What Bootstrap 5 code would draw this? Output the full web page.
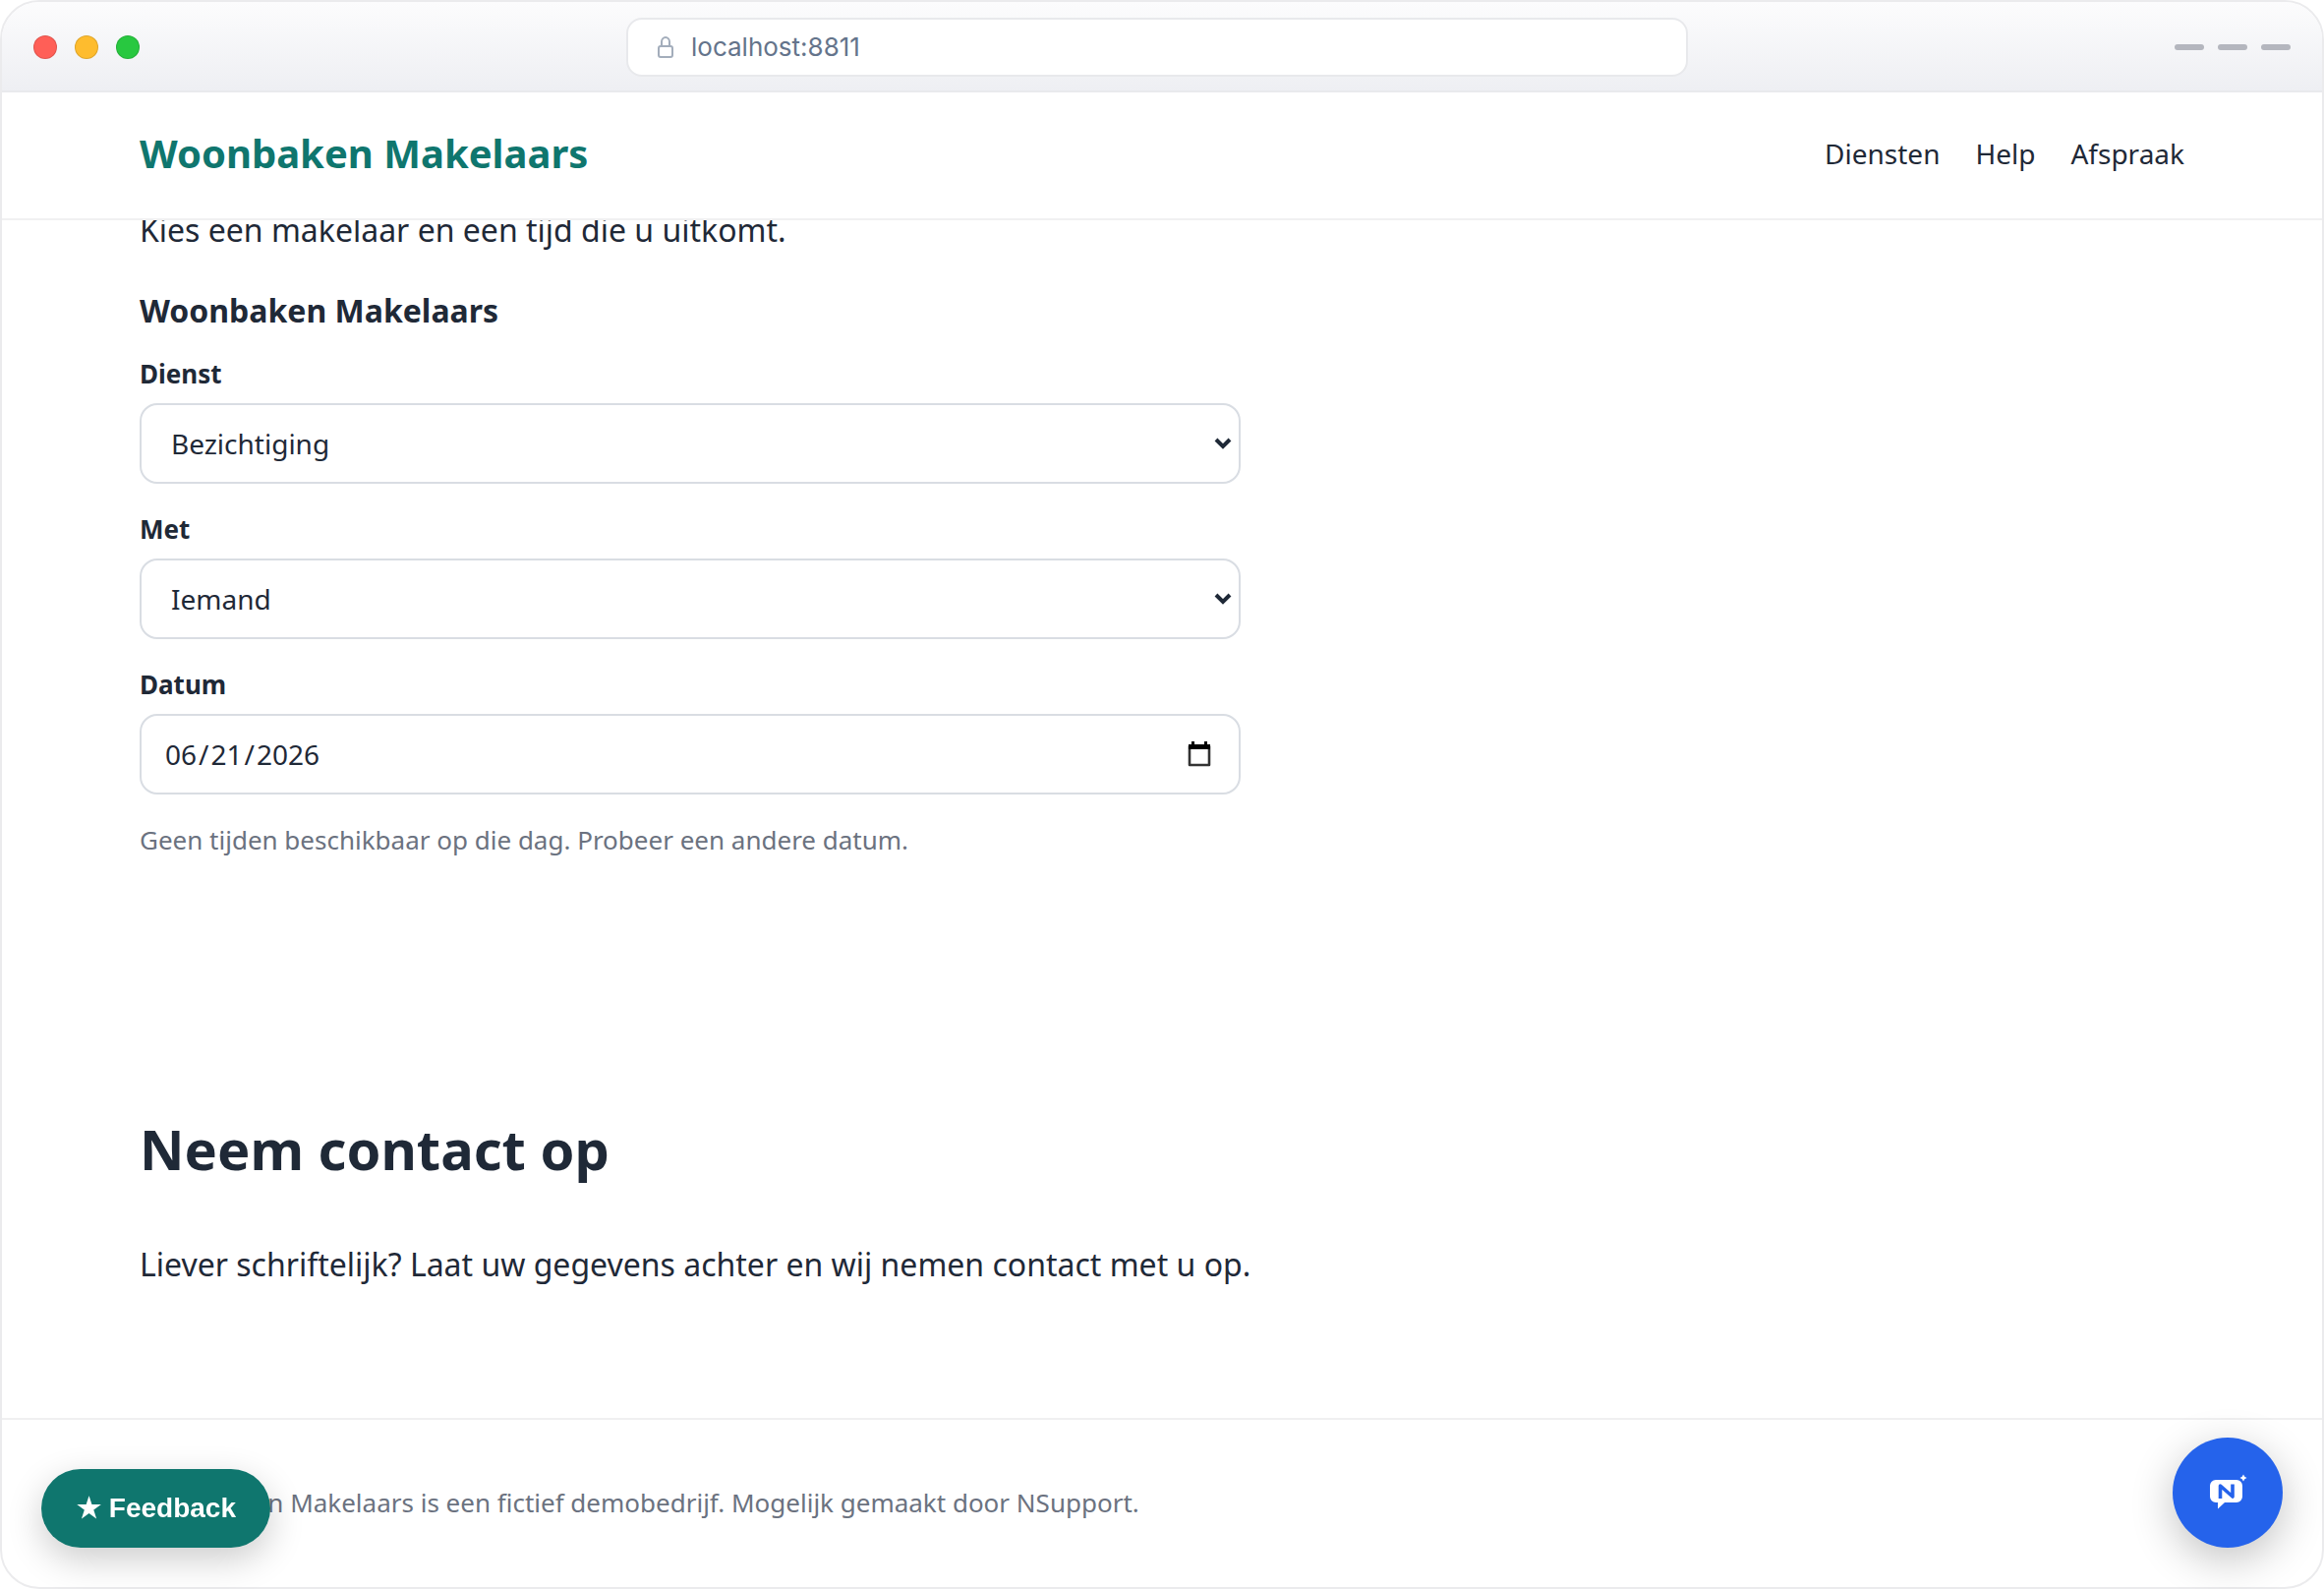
<!DOCTYPE html>
<html lang="nl">
<head>
<meta charset="utf-8">
<meta name="viewport" content="width=device-width, initial-scale=1">
<title>Woonbaken Makelaars</title>
<link href="https://cdn.jsdelivr.net/npm/bootstrap@5.3.0/dist/css/bootstrap.min.css" rel="stylesheet">
<style>
  :root { --ink: #1f2937; --muted: #6b7280; --teal: #0f766e; --line: #f0f0f1; --field: #d9dde3; }
  body { font-family: "Noto Sans", sans-serif; color: var(--ink); background: #fff; }
  .browser { min-height: 100vh; border: 2px solid #ebebed; border-radius: 40px; overflow: hidden; }

  .titlebar { padding: 16px 32px 14px; background: linear-gradient(#fcfcfd, #eeeff3); border-bottom: 2px solid #e9eaed; }
  .lights { gap: 18px; }
  .light { width: 24px; height: 24px; border-radius: 50%; border: 1px solid rgba(0, 0, 0, .12); }
  .light-red { background: #ff5f57; }
  .light-amber { background: #febc2e; }
  .light-green { background: #28c840; }
  .dashes { gap: 14px; }
  .dash { width: 30px; height: 6px; border-radius: 3px; background: #b4b6be; }
  .address { flex: 0 1 1080px; height: 60px; gap: 18px; padding: 0 30px; border: 2px solid #e8e9ec; border-radius: 16px; background: #fff; }
  .address input { border: 0; padding: 0; background: none; outline: 0; font: 26px/32px Inter, sans-serif; color: #64748b; }

  .wrap { padding-left: 140px; padding-right: 140px; }
  .site-head { position: relative; z-index: 2; padding-top: 36px; padding-bottom: 40px; background: #fff; border-bottom: 2px solid var(--line); }
  .brand { font-size: 40px; line-height: 52px; font-weight: 700; color: var(--teal); text-decoration: none; }
  .site-nav { gap: 36px; }
  .site-nav a { font-size: 28px; line-height: 44px; color: var(--ink); text-decoration: none; }

  .intro { font-size: 32px; line-height: 52px; margin: 0; }
  .booking { margin-top: -16px; max-width: 1120px; }
  .booking h3 { font-size: 32px; line-height: 44px; font-weight: 700; margin: 34px 0 24px; }
  .booking label { font-size: 26px; line-height: 36px; font-weight: 700; margin-bottom: 12px; }
  .booking .form-select, .booking .form-control { height: 82px; border: 2px solid var(--field); border-radius: 18px; font-size: 28px; line-height: 42px; color: var(--ink); background-color: #fff; padding: 0 24px; }
  .booking .form-select { padding-left: 30px; background-position: right 7px center; background-size: 18px 12px; background-image: url("data:image/svg+xml,%3Csvg xmlns='http://www.w3.org/2000/svg' viewBox='0 0 18 12'%3E%3Cpath d='M2 2l7 7 7-7' fill='none' stroke='%231f2937' stroke-width='4'/%3E%3C/svg%3E"); }
  .booking input::-webkit-datetime-edit-text { padding: 0 2px; }
  .booking input::-webkit-calendar-picker-indicator { width: 26px; height: 28px; padding: 0; margin: 0 3px 0 0; background: url("data:image/svg+xml,%3Csvg xmlns='http://www.w3.org/2000/svg' viewBox='0 0 26 28'%3E%3Cpath d='M3 6h20v19H3z' fill='none' stroke='%23333' stroke-width='2.6' stroke-linejoin='round'/%3E%3Cpath d='M2 4h22v5H2zM5 1h3v4H5zM18 1h3v4h-3z'/%3E%3C/svg%3E") no-repeat center; }
  .field { margin-bottom: 28px; }
  .hint { font-size: 26px; line-height: 36px; color: var(--muted); margin: 0; }
  .contact { margin-top: 258px; padding-bottom: 124px; }
  .contact h2 { font-size: 56px; line-height: 76px; font-weight: 700; margin: 0 0 54px; }

  .site-foot { padding-top: 64px; padding-bottom: 66px; border-top: 2px solid var(--line); font-size: 26px; line-height: 40px; color: var(--muted); }
  .site-foot p { margin: 0; }
  .feedback { position: fixed; left: 42px; bottom: 42px; height: 80px; padding: 0 35px 0 36px; border: 0; border-radius: 40px; background: var(--teal); color: #fff; font: 700 28px/34px "Liberation Sans", sans-serif; box-shadow: 0 12px 36px rgba(0, 0, 0, .2); }
  .chat { position: fixed; right: 42px; bottom: 42px; width: 112px; height: 112px; border: 0; border-radius: 50%; background: #2563eb; box-shadow: 0 12px 44px rgba(0, 0, 0, .24); }
</style>
<script src="https://cdn.jsdelivr.net/npm/bootstrap@5.3.0/dist/js/bootstrap.bundle.min.js"></script>
</head>
<body>
<div class="browser d-flex flex-column">
  <div class="titlebar d-flex align-items-center justify-content-between">
    <div class="lights d-flex">
      <span class="light light-red"></span><span class="light light-amber"></span><span class="light light-green"></span>
    </div>
    <div class="address d-flex align-items-center">
      <svg width="16" height="22" viewBox="0 0 16 22" fill="none" stroke="#a3adbb" stroke-width="2" aria-hidden="true"><rect x="1" y="10" width="14" height="11" rx="2"/><path d="M4 10V5.500a4 4.500 0 0 1 8 0V10"/></svg>
      <input class="flex-fill" type="text" value="localhost:8811" aria-label="Adres">
    </div>
    <div class="dashes d-flex">
      <span class="dash"></span><span class="dash"></span><span class="dash"></span>
    </div>
  </div>

  <header class="site-head wrap d-flex align-items-center justify-content-between">
    <a class="brand" href="#">Woonbaken Makelaars</a>
    <nav class="site-nav d-flex">
      <a href="#diensten">Diensten</a><a href="#help">Help</a><a href="#afspraak">Afspraak</a>
    </nav>
  </header>

  <main class="wrap flex-fill">
    <section class="booking" id="afspraak">
      <p class="intro">Kies een makelaar en een tijd die u uitkomt.</p>
      <h3>Woonbaken Makelaars</h3>
      <div class="field">
        <label class="d-block" for="dienst">Dienst</label>
        <select class="form-select" id="dienst"><option>Bezichtiging</option></select>
      </div>
      <div class="field">
        <label class="d-block" for="met">Met</label>
        <select class="form-select" id="met"><option>Iemand</option></select>
      </div>
      <div class="field">
        <label class="d-block" for="datum">Datum</label>
        <input class="form-control" type="date" id="datum" value="2026-06-21">
      </div>
      <p class="hint">Geen tijden beschikbaar op die dag. Probeer een andere datum.</p>
    </section>
    <section class="contact" id="contact">
      <h2>Neem contact op</h2>
      <p class="intro">Liever schriftelijk? Laat uw gegevens achter en wij nemen contact met u op.</p>
    </section>
  </main>

  <footer class="site-foot wrap">
    <p>Woonbaken Makelaars is een fictief demobedrijf. Mogelijk gemaakt door NSupport.</p>
  </footer>
</div>

<button class="feedback" type="button">★ Feedback</button>
<button class="chat d-flex align-items-center justify-content-center p-0" type="button" aria-label="Chat">
  <svg class="overflow-visible" width="40" height="36" viewBox="1 1 40 36" aria-hidden="true">
    <path fill="#fff" d="M9 6h21a6 6 0 0 1 6 6v11a6 6 0 0 1-6 6H18l-7 6.500V29H9a6 6 0 0 1-6-6V12a6 6 0 0 1 6-6z"/>
    <path fill="none" stroke="#2563eb" stroke-width="3.600" stroke-linejoin="round" d="M13.500 25V12l12.500 11V10.500"/>
    <path fill="#fff" d="M37 .500l1.300 2.200L40.500 4l-2.200 1.300L37 7.500l-1.300-2.200L33.500 4l2.200-1.300z"/>
  </svg>
</button>
</body>
</html>
